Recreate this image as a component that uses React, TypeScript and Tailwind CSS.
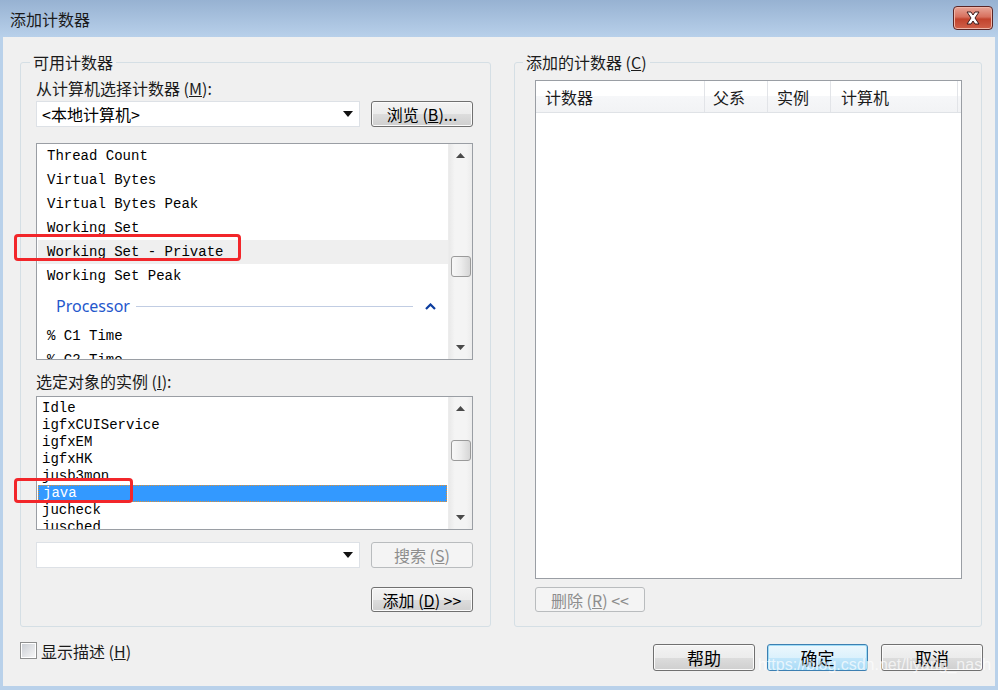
import React from "react";

const CJK = "font-['Noto_Sans_CJK_SC','Noto_Sans',sans-serif]";
const MONO = "font-['Liberation_Mono','DejaVu_Sans_Mono',monospace]";

function cx(...a: (string | false | undefined)[]) {
  return a.filter(Boolean).join(" ");
}

function Btn({
  children,
  className,
  disabled,
  focus,
}: {
  children: React.ReactNode;
  className?: string;
  disabled?: boolean;
  focus?: boolean;
}) {
  return (
    <div
      className={cx(
        "flex items-center justify-center rounded-[3px] border leading-none",
        CJK,
        disabled
          ? "border-[#b9bcbe] bg-[#f4f4f4] text-[#8d8d8d]"
          : focus
          ? "border-[#3c7fb1] bg-[linear-gradient(#ecf7fd_0%,#dcf1fc_50%,#c3e7fb_50%,#a9daf6_100%)] text-black shadow-[inset_0_0_0_1px_#9fdcf7]"
          : "border-[#707070] bg-[linear-gradient(#f3f3f3_0%,#ececec_50%,#dddddd_50%,#cfcfcf_100%)] text-black shadow-[inset_0_0_0_1px_#fbfbfb]",
        className
      )}
    >
      {children}
    </div>
  );
}

function Arrow({ down }: { down?: boolean }) {
  return (
    <svg width="9" height="5" viewBox="0 0 9 5">
      {down ? (
        <polygon points="0,0 9,0 4.5,5" fill="#4a4a4a" />
      ) : (
        <polygon points="0,5 9,5 4.5,0" fill="#4a4a4a" />
      )}
    </svg>
  );
}

function ScrollBar({ thumbTop }: { thumbTop: number }) {
  return (
    <div className="flex h-full w-[24px] flex-col border-l border-[#ececec] bg-[linear-gradient(to_right,#e9e9e9,#f4f4f4_25%,#f4f4f4_75%,#ececec)]">
      <div className="flex h-[23px] items-center justify-center">
        <Arrow />
      </div>
      <div className="flex-1">
        <div
          className="mx-auto h-[21px] w-[20px] rounded-[3px] border border-[#9a9a9a] bg-[linear-gradient(to_right,#f8f8f8,#ececec_50%,#d6d6d6)]"
          style={{ marginTop: thumbTop }}
        />
      </div>
      <div className="flex h-[23px] items-center justify-center">
        <Arrow down />
      </div>
    </div>
  );
}

function ComboArrow() {
  return (
    <svg width="10" height="6" viewBox="0 0 10 6">
      <polygon points="0,0 10,0 5,6" fill="#111" />
    </svg>
  );
}

export default function App() {
  const counters = [
    "Thread Count",
    "Virtual Bytes",
    "Virtual Bytes Peak",
    "Working Set",
    "Working Set - Private",
    "Working Set Peak",
  ];
  const instances = [
    "Idle",
    "igfxCUIService",
    "igfxEM",
    "igfxHK",
    "jusb3mon",
    "java",
    "jucheck",
    "jusched",
  ];

  return (
    <div className="relative flex h-[690px] w-[998px] flex-col overflow-hidden bg-[#b9d1ea]">
      {/* Title bar */}
      <div className="flex h-[37px] shrink-0 items-center justify-between bg-[linear-gradient(#97b2d2,#b8d0ea)] pl-[10px] pr-[5px]">
        <span className={cx("text-[16px] leading-none text-[#1b1b1b]", CJK)}>添加计数器</span>
        <div className="mb-[2px] flex h-[24px] w-[40px] items-center justify-center rounded-[4px] border border-[#5a2626] bg-[linear-gradient(#e8a698_0%,#d7705e_45%,#c2432d_55%,#d0614a_100%)] shadow-[inset_0_0_0_1px_#f0b6a8]">
          <svg width="18" height="14" viewBox="0 0 18 14">
            <path
              d="M3 1 L7 1 L9 4 L11 1 L15 1 L11 7 L15 13 L11 13 L9 10 L7 13 L3 13 L7 7 Z"
              fill="#ffffff"
              stroke="#3b1b1b"
              strokeWidth="1"
              strokeLinejoin="round"
            />
          </svg>
        </div>
      </div>

      {/* Body */}
      <div className="mx-[3px] mb-[4px] flex flex-1 flex-col bg-[#f0f0f0] pl-[17px] pr-[13px] pt-[16px]">
        <div className="flex gap-[23px]">
          {/* Left group */}
          <fieldset className="h-[574px] w-[470px] rounded-[3px] border border-[#d5dfe5] pl-[15px] pr-[17px]">
            <legend className={cx("ml-[-6px] px-[3px] text-[16px] leading-[18px] text-[#1b1b1b]", CJK)}>
              可用计数器
            </legend>
            <div className={cx("mt-[8px] h-[18px] text-[16px] leading-[18px] text-[#1b1b1b]", CJK)}>
              从计算机选择计数器 (<u>M</u>):
            </div>
            <div className="mt-[4px] flex h-[26px] items-center gap-[11px]">
              <div className="flex h-[26px] w-[324px] items-center justify-between border border-[#dde1e6] bg-white pl-[5px] pr-[6px]">
                <span className={cx("text-[16px] leading-none text-black", CJK)}>&lt;本地计算机&gt;</span>
                <ComboArrow />
              </div>
              <Btn className="h-[26px] w-[102px] text-[16px]">
                浏览 (<u>B</u>)...
              </Btn>
            </div>

            {/* counter list */}
            <div className="mt-[16px] flex h-[217px] w-[437px] border border-[#9a9ea4] bg-white">
              <div className="flex-1 overflow-hidden pl-[1px]">
                {counters.map((c, i) => (
                  <div
                    key={c}
                    className={cx(
                      "flex h-[24px] items-center pl-[9px] text-[14px] text-black",
                      MONO,
                      i === 4 && "bg-[#efefef]"
                    )}
                  >
                    {c}
                  </div>
                ))}
                <div className="flex h-[36px] items-center pl-[18px] pr-[12px]">
                  <span className="font-['Noto_Sans',sans-serif] text-[16px] leading-none text-[#2457cc]">
                    Processor
                  </span>
                  <div className="ml-[6px] h-px flex-1 bg-[#c1cde3]" />
                  <svg className="ml-[12px]" width="11" height="7" viewBox="0 0 11 7">
                    <path d="M1 6 L5.5 1.5 L10 6" fill="none" stroke="#0c3c9e" strokeWidth="2.2" />
                  </svg>
                </div>
                <div className={cx("flex h-[24px] items-center pl-[9px] text-[14px] text-black", MONO)}>
                  % C1 Time
                </div>
                <div className={cx("flex h-[24px] items-center pl-[9px] text-[14px] text-black", MONO)}>
                  % C2 Time
                </div>
              </div>
              <ScrollBar thumbTop={89} />
            </div>

            <div className={cx("mt-[12px] h-[18px] text-[16px] leading-[18px] text-[#1b1b1b]", CJK)}>
              选定对象的实例 (<u>I</u>):
            </div>

            {/* instance list */}
            <div className="mt-[6px] flex h-[134px] w-[437px] border border-[#9a9ea4] bg-white">
              <div className="flex-1 overflow-hidden pl-[1px] pr-[1px] pt-[3px]">
                {instances.map((c, i) => (
                  <div
                    key={c}
                    className={cx(
                      "flex h-[17px] items-center pl-[4px] text-[14px]",
                      MONO,
                      i === 5
                        ? "border border-dotted border-[#e3902e] bg-[#3399ff] pl-[3px] text-white"
                        : "text-black"
                    )}
                  >
                    {c}
                  </div>
                ))}
              </div>
              <ScrollBar thumbTop={20} />
            </div>

            <div className="mt-[12px] flex h-[26px] items-center gap-[11px]">
              <div className="flex h-[26px] w-[324px] items-center justify-end border border-[#dde1e6] bg-white pr-[6px]">
                <ComboArrow />
              </div>
              <Btn disabled className="h-[26px] w-[102px] text-[16px]">
                搜索 (<u>S</u>)
              </Btn>
            </div>
            <div className="mt-[19px] flex justify-end">
              <Btn className="h-[25px] w-[102px] text-[16px]">
                添加 (<u>D</u>) &gt;&gt;
              </Btn>
            </div>
          </fieldset>

          {/* Right group */}
          <fieldset className="h-[574px] w-[469px] rounded-[3px] border border-[#d5dfe5] pl-[20px] pr-[19px]">
            <legend className={cx("ml-[-12px] px-[3px] text-[16px] leading-[18px] text-[#1b1b1b]", CJK)}>
              添加的计数器 (<u>C</u>)
            </legend>
            <div className="mt-[9px] flex h-[499px] flex-col border border-[#9a9ea4] bg-white">
              <div
                className={cx(
                  "flex h-[32px] border-b border-[#dfe2e6] bg-[linear-gradient(#ffffff,#ffffff_50%,#f6f7f9_50%,#f2f3f5)] text-[16px] text-[#1b1b1b]",
                  CJK
                )}
              >
                <div className="flex w-[169px] items-center border-r border-[#e2e4e8] pl-[9px]">计数器</div>
                <div className="flex w-[63px] items-center border-r border-[#e2e4e8] pl-[8px]">父系</div>
                <div className="flex w-[63px] items-center border-r border-[#e2e4e8] pl-[9px]">实例</div>
                <div className="flex w-[127px] items-center border-r border-[#e2e4e8] pl-[10px]">计算机</div>
                <div className="flex-1" />
              </div>
            </div>
            <Btn disabled className="mt-[8px] h-[25px] w-[110px] text-[16px]">
              删除 (<u>R</u>) &lt;&lt;
            </Btn>
          </fieldset>
        </div>

        {/* Bottom row */}
        <div className="mt-[15px] flex items-start justify-between">
          <div className="flex items-center">
            <div className="flex h-[17px] w-[17px] items-center justify-center border border-[#8e8f8f] bg-white">
              <div className="h-[13px] w-[13px] bg-[linear-gradient(135deg,#cbcfd5,#f6f6f6)]" />
            </div>
            <span className={cx("ml-[4px] text-[16px] leading-none text-[#1b1b1b]", CJK)}>
              显示描述 (<u>H</u>)
            </span>
          </div>
          <div className="mr-[-1px] mt-[2px] flex">
            <Btn className="h-[27px] w-[102px] text-[17px]">帮助</Btn>
            <Btn focus className="ml-[12px] h-[27px] w-[101px] text-[17px]">
              确定
            </Btn>
            <Btn className="ml-[13px] h-[27px] w-[102px] text-[17px]">取消</Btn>
          </div>
        </div>
      </div>

      {/* Annotation overlays */}
      <div className="pointer-events-none absolute left-[14px] top-[234px] h-[27px] w-[227px] rounded-[4px] border-[3px] border-[#f2262a]" />
      <div className="pointer-events-none absolute left-[14px] top-[478px] h-[25px] w-[119px] rounded-[4px] border-[3px] border-[#f2262a]" />
      <div className="pointer-events-none absolute left-[758px] top-[656px] font-['Liberation_Sans',Arial,sans-serif] text-[16px] leading-[18px] text-white/70">
        https://blog.csdn.net/liyang_nash
      </div>
    </div>
  );
}
